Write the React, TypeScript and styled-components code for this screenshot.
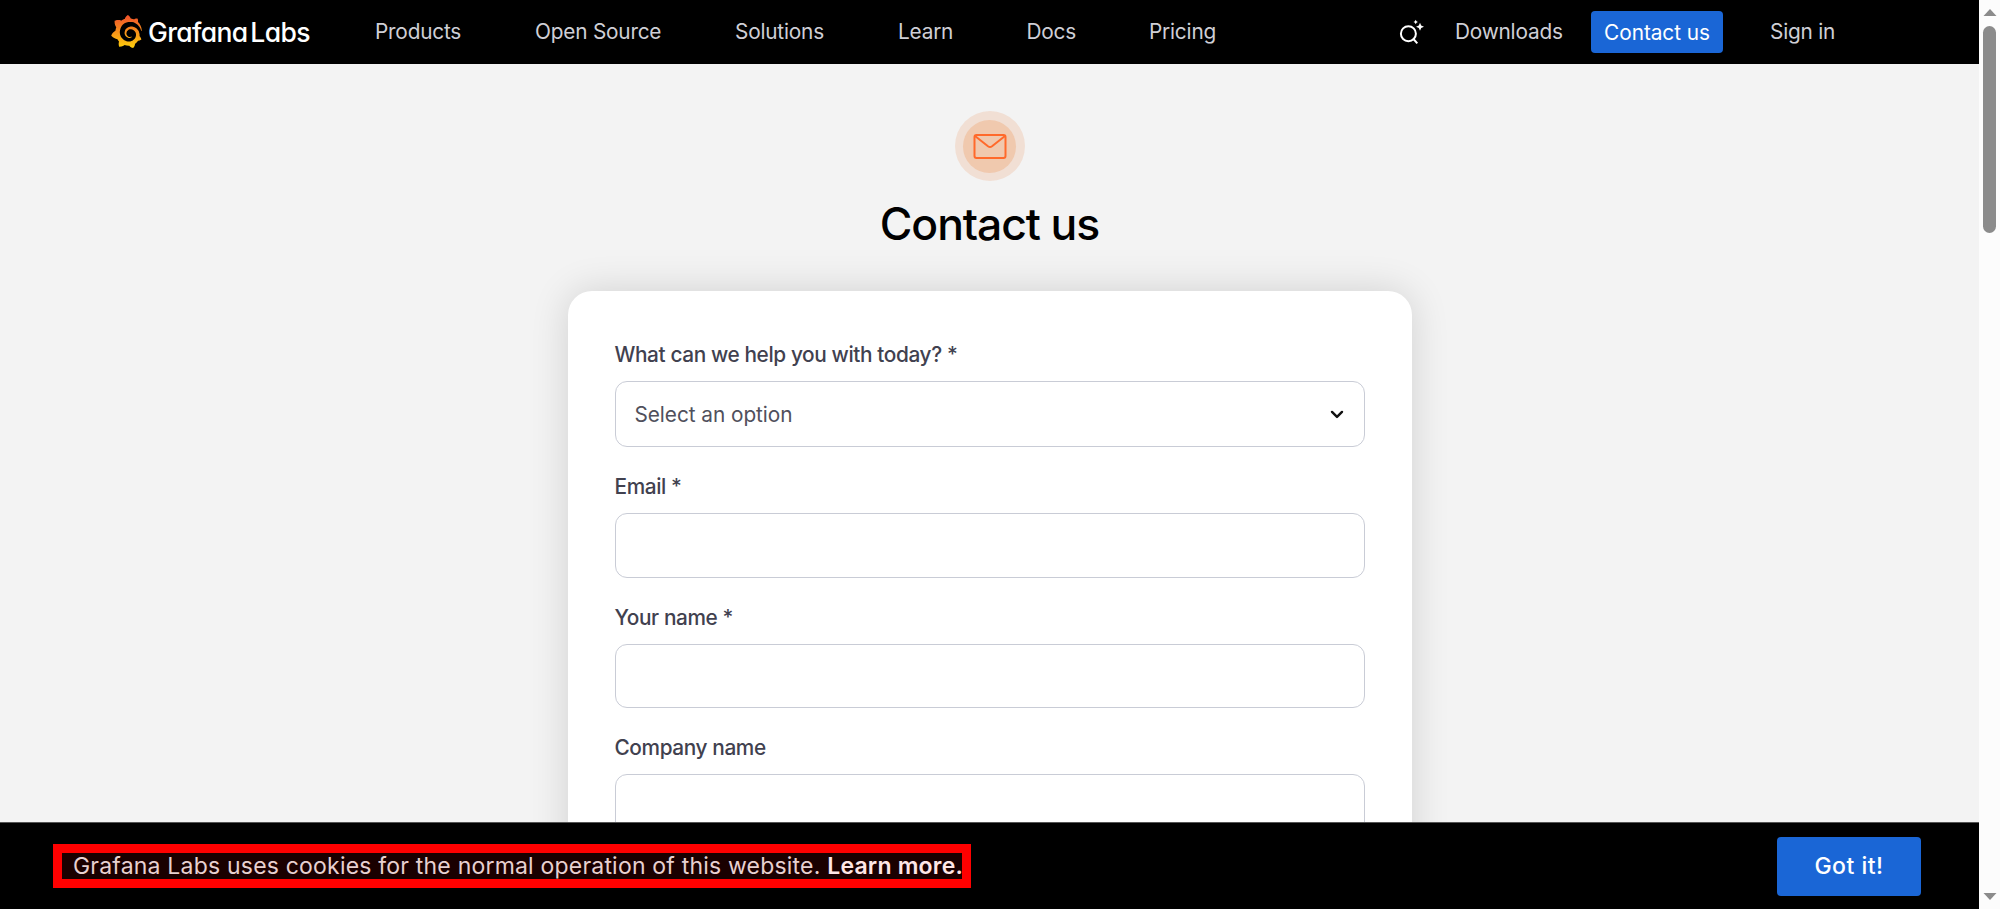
import React from "react";
import styled, { createGlobalStyle } from "styled-components";
import { SiGrafana } from "react-icons/si";

const Global = createGlobalStyle`
  * { box-sizing: border-box; }
  body { margin: 0; background: #f3f3f3; overflow: hidden; font-family: Inter, "Liberation Sans", sans-serif; }
  button, input { font-family: inherit; }
`;

const Shell = styled.div`
  display: flex;
  height: 909px;
  width: 2000px;
  overflow: hidden;
`;
const Page = styled.div`
  flex: 1;
  display: flex;
  flex-direction: column;
  min-width: 0;
`;
const Header = styled.header`
  height: 64px;
  flex: none;
  background: #000;
  display: flex;
  align-items: center;
  padding-left: 111px;
`;
const Brand = styled.a`
  display: flex;
  align-items: center;
  width: 264px;
  gap: 5px;
  color: #fff;
`;
const BrandMark = styled(SiGrafana)`
  width: 33px;
  height: 33px;
  margin: -2px 0 0 -1px;
  path { fill: url(#flame); }
`;
const Gradient = styled.svg`
  position: absolute;
  width: 0;
  height: 0;
`;
const BrandName = styled.span`
  font-size: 26.5px;
  font-weight: 450;
  letter-spacing: -0.65px;
  word-spacing: -3.5px;
  font-feature-settings: "cv11";
  white-space: nowrap;
  margin-top: -1px;
`;
const NavItem = styled.a<{ $w: number }>`
  width: ${(p) => p.$w}px;
  flex: none;
  font-size: 20.8px;
  line-height: 30px;
  letter-spacing: -0.2px;
  color: #cfcfd6;
  white-space: nowrap;
`;
const SearchIcon = styled.svg`
  width: 25px;
  height: 28px;
  margin-right: 31px;
  flex: none;
`;
const ContactButton = styled.button`
  width: 132px;
  height: 42px;
  border: 0;
  padding: 0;
  border-radius: 4px;
  background: #1a66d6;
  color: #fff;
  font-size: 20.8px;
  letter-spacing: -0.05px;
  margin-right: 47px;
  white-space: nowrap;
`;
const Main = styled.main`
  flex: 1;
  min-height: 0;
  overflow: hidden;
  display: flex;
  flex-direction: column;
  align-items: center;
  padding-top: 47px;
`;
const Badge = styled.div`
  width: 70px;
  height: 70px;
  flex: none;
  border-radius: 50%;
  background: #f1dfd4;
  display: grid;
  place-items: center;
`;
const BadgeInner = styled.div`
  width: 53px;
  height: 53px;
  border-radius: 50%;
  background: #f0c9ae;
  display: grid;
  place-items: center;
`;
const Title = styled.h1`
  margin: 16px 0 39px;
  font-size: 44.5px;
  line-height: 55px;
  font-weight: 500;
  letter-spacing: -1.1px;
  color: #000;
  flex: none;
`;
const Card = styled.form`
  width: 844px;
  flex: none;
  height: 900px;
  background: #fff;
  border-radius: 24px;
  box-shadow: 0 0 38px rgba(0, 0, 0, 0.14);
  padding: 47px 47px 0;
`;
const Field = styled.div`
  display: flex;
  flex-direction: column;
  margin-bottom: 23px;
`;
const Label = styled.label`
  font-size: 20.8px;
  line-height: 33px;
  margin-bottom: 10px;
  font-weight: 500;
  letter-spacing: -0.38px;
  color: #41414f;
`;
const Input = styled.input`
  height: 64.5px;
  border: 1px solid #c9ccd6;
  border-radius: 12px;
  background: #fff;
  outline: none;
`;
const Select = styled.div`
  height: 66px;
  border: 1px solid #c9ccd6;
  border-radius: 12px;
  display: flex;
  align-items: center;
  justify-content: space-between;
  padding: 0 20px 0 19px;
  font-size: 20.8px;
  letter-spacing: -0.05px;
  color: #50505c;
`;
const CookieBar = styled.footer`
  height: 87px;
  flex: none;
  background: #000;
  border-top: 1px solid #555;
  display: flex;
  align-items: center;
  justify-content: space-between;
  padding: 0 58px 0 53px;
`;
const Notice = styled.div`
  width: 918px;
  height: 44px;
  border: 9px solid #f00;
  background: #1a0000;
  color: #e8d0d0;
  display: flex;
  align-items: center;
  padding-left: 11px;
  font-size: 23px;
  letter-spacing: 0.2px;
  white-space: pre;
`;
const LearnMore = styled.a`
  font-weight: 600;
  color: #ffe6e6;
`;
const AcceptButton = styled.button`
  width: 144px;
  height: 59px;
  border: 0;
  border-radius: 4px;
  background: #1a66d6;
  color: #fff;
  font-size: 23px;
  font-weight: 500;
  letter-spacing: 0.5px;
`;
const ScrollTrack = styled.aside`
  width: 21px;
  background: #fcfcfc;
  display: flex;
  flex-direction: column;
  align-items: center;
  padding: 9px 0;
`;
const ScrollThumb = styled.div`
  width: 13px;
  height: 207px;
  margin: 10px 0 auto;
  border-radius: 7px;
  background: #8b8b8b;
`;

const links = [
  { text: "Products", w: 160 },
  { text: "Open Source", w: 200 },
  { text: "Solutions", w: 163 },
  { text: "Learn", w: 128.5 },
  { text: "Docs", w: 122.5 },
  { text: "Pricing", w: 250 },
];

export default function App() {
  return (
    <Shell>
      <Global />
      <Page>
        <Header>
          <Gradient>
            <linearGradient id="flame" x1="0" y1="0" x2="0" y2="1">
              <stop offset="0.05" stopColor="#f1562a" />
              <stop offset="0.95" stopColor="#fcc80c" />
            </linearGradient>
          </Gradient>
          <Brand>
            <BrandMark />
            <BrandName>Grafana Labs</BrandName>
          </Brand>
          {links.map((l) => (
            <NavItem key={l.text} $w={l.w}>{l.text}</NavItem>
          ))}
          <SearchIcon viewBox="0 0 25 28" fill="none" stroke="#fff" strokeWidth="2">
            <circle cx="9.4" cy="15.7" r="7.5" />
            <path d="M14 20.5l4.3 4.8" />
            <path fill="#fff" stroke="none" d="M21 4.7l1.2 2.8 2.8 1.2-2.8 1.2-1.2 2.8-1.2-2.8-2.8-1.2 2.8-1.2zM16.7 1.8l.8 1.4 1.4.8-1.4.8-.8 1.4-.8-1.4-1.4-.8 1.4-.8z" />
          </SearchIcon>
          <NavItem $w={136}>Downloads</NavItem>
          <ContactButton>Contact us</ContactButton>
          <NavItem $w={70}>Sign in</NavItem>
        </Header>
        <Main>
          <Badge>
            <BadgeInner>
              <svg width="34" height="26" viewBox="0 0 34 26" fill="none" stroke="#ff6a2b" strokeWidth="2" strokeLinejoin="round">
                <rect x="1.5" y="2" width="31" height="23" rx="2" />
                <path d="M2 3l13 10.3q2 1.5 4 0L32 3" />
              </svg>
            </BadgeInner>
          </Badge>
          <Title>Contact us</Title>
          <Card>
            <Field>
              <Label>What can we help you with today? *</Label>
              <Select>
                Select an option
                <svg width="14" height="9" viewBox="0 0 14 9" fill="none" stroke="#111" strokeWidth="2.4" strokeLinecap="round" strokeLinejoin="round">
                  <path d="M2 1.9l5 5 5-5" />
                </svg>
              </Select>
            </Field>
            <Field><Label>Email *</Label><Input /></Field>
            <Field><Label>Your name *</Label><Input /></Field>
            <Field><Label>Company name</Label><Input /></Field>
          </Card>
        </Main>
        <CookieBar>
          <Notice>
            Grafana Labs uses cookies for the normal operation of this website. <LearnMore>Learn more.</LearnMore>
          </Notice>
          <AcceptButton>Got it!</AcceptButton>
        </CookieBar>
      </Page>
      <ScrollTrack>
        <svg width="14" height="7" viewBox="0 0 14 7"><path d="M7 0l6.5 7H.5z" fill="#8b8b8b" /></svg>
        <ScrollThumb />
        <svg width="14" height="7" viewBox="0 0 14 7"><path d="M.5 0h13L7 7z" fill="#8b8b8b" /></svg>
      </ScrollTrack>
    </Shell>
  );
}
